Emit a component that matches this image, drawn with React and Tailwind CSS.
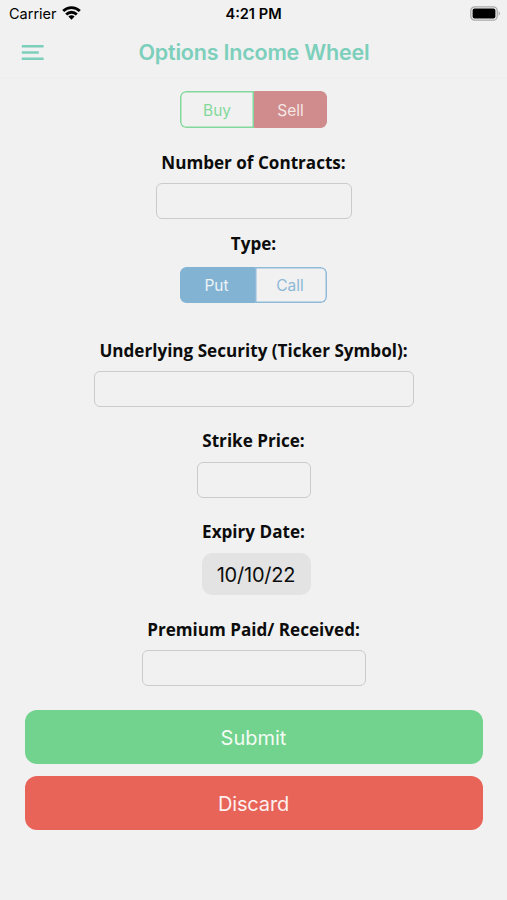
import { useState } from 'react';

function StatusBar() {
  return (
    <div className="relative flex h-7 items-center justify-between pl-[9px] pr-[6px] text-black">
      <div className="flex items-center gap-[6px]">
        <span className="text-[14.5px] leading-7">Carrier</span>
        <svg width="19" height="14" viewBox="0 0 19 14" fill="none" stroke="currentColor" strokeWidth="2.8" className="relative -left-px -top-px">
          <path d="M1.2 5.1a11.8 11.8 0 0 1 16.6 0" />
          <path d="M4.2 8.4a7.6 7.6 0 0 1 10.6 0" />
          <path d="M9.5 13.7 6.4 10.6a4.4 4.4 0 0 1 6.2 0z" fill="currentColor" stroke="none" />
        </svg>
      </div>
      <span className="absolute inset-x-0 text-center text-[14.6px] font-semibold leading-7">4:21 PM</span>
      <svg width="31" height="15" viewBox="0 0 31 15" className="relative -top-px">
        <rect x="0.8" y="0.8" width="26.4" height="13.4" rx="4" fill="none" stroke="#a9a9a9" strokeWidth="1.3" />
        <rect x="2.6" y="2.6" width="22.8" height="9.8" rx="2" fill="#000" />
        <path d="M28.6 5.2a2.6 2.6 0 0 1 0 4.6z" fill="#a9a9a9" />
      </svg>
    </div>
  );
}

function Header() {
  return (
    <div className="relative flex h-[50px] items-center border-b border-[#eeeeee] pl-[21px]">
      <button type="button" aria-label="Menu" className="text-[#7ccfbb]">
        <svg width="23" height="17" viewBox="0 0 23 17" stroke="currentColor" strokeWidth="2.5">
          <path d="M0.8 2.2h21.8M0.8 8.5h17M0.8 14.8h21.8" />
        </svg>
      </button>
      <h1 className="absolute inset-x-0 pl-px text-center text-[21.5px] font-semibold tracking-[-0.2px] text-[#7ccfbb]">
        Options Income Wheel
      </h1>
    </div>
  );
}

function Label({ children, className }) {
  return (
    <label className={`block h-6 whitespace-nowrap font-['Open_Sans',sans-serif] text-[17.1px] font-bold leading-[26px] text-[#0c0c0c] ${className}`}>
      {children}
    </label>
  );
}

function Input({ className }) {
  return (
    <input
      type="text"
      className={`block rounded-[6px] border border-[#cbcbcb] bg-transparent px-2 outline-none ${className}`}
    />
  );
}

function App() {
  const [side, setSide] = useState('sell');
  const [type, setType] = useState('put');

  return (
    <div className="h-[900px] w-[507px] overflow-hidden bg-[#f1f1f1] font-['Inter',sans-serif]">
      <StatusBar />
      <Header />

      <form className="flex flex-col items-center pt-[13px]" onSubmit={(e) => e.preventDefault()}>
        {/* Buy / Sell */}
        <div className="flex h-[37px] w-[147px] overflow-hidden rounded-[6px] text-[15.5px]">
          <button
            type="button"
            onClick={() => setSide('buy')}
            className={`w-[74px] rounded-l-[6px] pt-[2px] shadow-[inset_0_0_0_1.5px_#83d99b] ${side === 'buy' ? 'bg-[#83d99b] text-[#f1f1f1]' : 'text-[#83d99b]'}`}
          >
            Buy
          </button>
          <button
            type="button"
            onClick={() => setSide('sell')}
            className={`w-[73px] rounded-r-[6px] border border-[#d08c8c] pt-[2px] ${side === 'sell' ? 'bg-[#d08c8c] text-[#f5e6e6]' : 'text-[#d08c8c]'}`}
          >
            Sell
          </button>
        </div>

        <Label className="mt-[22px]">Number of Contracts:</Label>
        <Input className="mt-[9px] h-9 w-[196px]" />

        {/* Put / Call */}
        <Label className="mt-3">Type:</Label>
        <div className="mt-3 flex h-9 w-[147px] overflow-hidden rounded-[6px] text-[15.5px]">
          <button
            type="button"
            onClick={() => setType('put')}
            className={`w-[75px] rounded-l-[6px] border border-[#83b3d3] pr-[2px] pt-[2px] ${type === 'put' ? 'bg-[#83b3d3] text-[#edf3f7]' : 'text-[#8db8d6]'}`}
          >
            Put
          </button>
          <button
            type="button"
            onClick={() => setType('call')}
            className={`w-[72px] rounded-r-[6px] pr-[2px] pt-[2px] shadow-[inset_0_0_0_1.5px_#8fbbd9] ${type === 'call' ? 'bg-[#83b3d3] text-[#edf3f7]' : 'text-[#8db8d6]'}`}
          >
            Call
          </button>
        </div>

        <Label className="mt-[35px]">Underlying Security (Ticker Symbol):</Label>
        <Input className="mt-[9px] h-9 w-80" />

        <Label className="mt-[21px]">Strike Price:</Label>
        <Input className="mt-[10px] h-9 w-[114px]" />

        <Label className="mt-[21px]">Expiry Date:</Label>
        <button type="button" className="ml-[5px] mt-[10px] h-[42px] w-[109px] rounded-[10px] bg-[#e3e3e3] pt-[2px] text-[20px] tracking-[-0.2px] text-[#0c0c0c]">
          10/10/22
        </button>

        <Label className="mt-[22px]">Premium Paid/ Received:</Label>
        <Input className="mt-[9px] h-9 w-[224px]" />

        <button type="submit" className="mt-6 h-[54px] w-[458px] rounded-[12px] bg-[#71d38d] pt-px text-[20px] text-[#f3fbf5]">
          Submit
        </button>
        <button type="button" className="mt-3 h-[54px] w-[458px] rounded-[12px] bg-[#e86459] pt-px text-[20px] tracking-[-0.15px] text-[#fdf0ef]">
          Discard
        </button>
      </form>
    </div>
  );
}

export default App;
